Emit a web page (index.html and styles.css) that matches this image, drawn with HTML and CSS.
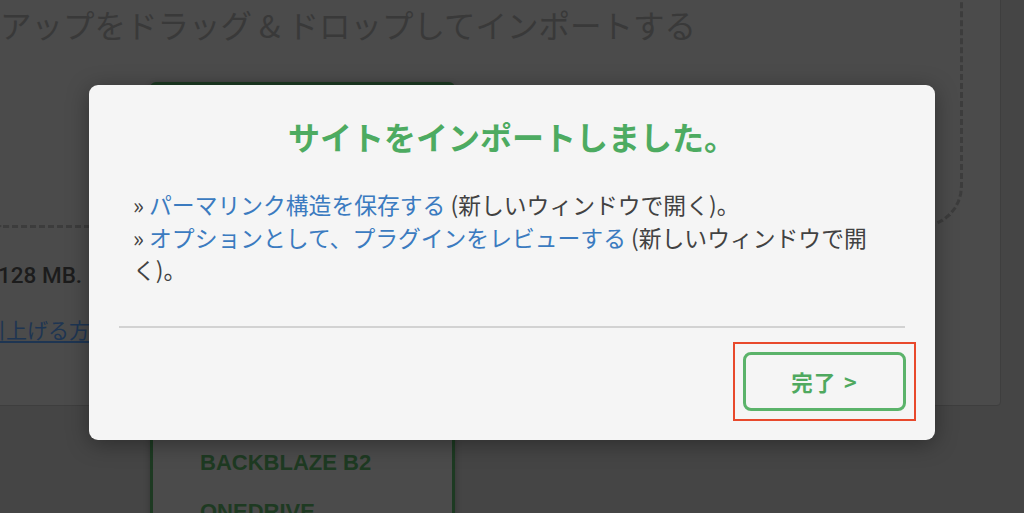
FILE: index.html
```html
<!DOCTYPE html>
<html lang="ja">
<head>
<meta charset="utf-8">
<title>インポート完了</title>
<link rel="stylesheet" href="styles.css">
</head>
<body>
  <div class="page">
    <section class="card">
      <div class="dropzone">
        <h1 class="dropzone-title">アップをドラッグ &amp; ドロップしてインポートする</h1>
      </div>
      <p class="limit">128 MB.</p>
      <p class="help"><a href="#" class="help-link">引上げる方法</a></p>
    </section>
  </div>

  <ul class="dropdown">
    <li>ファイル</li>
    <li>URL</li>
    <li>FTP</li>
    <li>DROPBOX</li>
    <li>GOOGLE DRIVE</li>
    <li>AMAZON S3</li>
    <li>BOX</li>
    <li>BACKBLAZE B2</li>
    <li>ONEDRIVE</li>
  </ul>

  <div class="overlay">
    <div class="modal" role="dialog">
      <div class="modal-body">
        <h2 class="modal-title">サイトをインポートしました。</h2>
        <p class="modal-text">» <a href="#" class="link">パーマリンク構造を保存する</a> (新しいウィンドウで開く)。<br>» <a href="#" class="link">オプションとして、プラグインをレビューする</a> (新しいウィンドウで開く)。</p>
      </div>
      <hr class="divider">
      <div class="modal-footer">
        <div class="highlight">
          <button class="btn-done">完了 &gt;</button>
        </div>
      </div>
    </div>
  </div>
</body>
</html>
```

FILE: styles.css
```css
html, body {
  margin: 0;
  padding: 0;
}

body {
  width: 1024px;
  height: 513px;
  overflow: hidden;
  background: #454545;
  font-family: "Noto Sans CJK JP", "Noto Sans", sans-serif;
  position: relative;
}

.page {
  height: 513px;
  overflow: hidden;
}

/* dimmed page underneath */
.card {
  margin: -60px 0 0 -40px;
  width: 1041px;
  box-sizing: border-box;
  background: #4b4b4b;
  border: 1px solid #3e3e3e;
  border-radius: 4px;
  padding: 0 37px 61px;
}

.dropzone {
  box-sizing: border-box;
  height: 287px;
  border: 3px dashed #3c3c3c;
  border-top: none;
  border-left: none;
  border-radius: 0 0 42px 0;
  padding: 63px 0 0 2px;
}

.dropzone-title {
  margin: 0;
  font-size: 31.5px;
  line-height: 40px;
  font-weight: 400;
  color: #393939;
  white-space: nowrap;
}

.limit {
  margin: 33px 0 0;
  font-family: Roboto, "Noto Sans", sans-serif;
  font-weight: 500;
  font-size: 22.5px;
  line-height: 28px;
  color: #1c1c1c;
}

.help {
  margin: 25px 0 0;
  font-size: 21px;
  line-height: 30px;
}

.help-link {
  margin-left: -13px;
  color: #1e3552;
  text-decoration: underline;
  text-decoration-color: #1e3552;
  text-underline-offset: 3px;
}

.dropdown {
  position: absolute;
  left: 150px;
  top: 82px;
  width: 305px;
  height: 520px;
  box-sizing: border-box;
  margin: 0;
  padding: 10px 0 0 47px;
  list-style: none;
  border: 3px solid #1d3a22;
  border-radius: 6px;
  background: #4b4b4b;
  box-shadow: 0 2px 6px rgba(0, 0, 0, 0.25);
}

.dropdown li {
  height: 49px;
  line-height: 49px;
  font-family: "Liberation Sans", Arial, sans-serif;
  font-weight: 700;
  font-size: 22px;
  color: #1e3a22;
  white-space: nowrap;
}

/* modal */
.overlay {
  position: absolute;
  inset: 0;
  display: flex;
  justify-content: center;
  align-items: flex-start;
  padding-top: 85px;
}

.modal {
  width: 846px;
  background: #f5f5f5;
  border-radius: 9px;
  box-shadow: 0 4px 22px rgba(0, 0, 0, 0.35);
}

.modal-body {
  padding: 31px 44px 39px;
}

.modal-title {
  margin: 0;
  text-align: center;
  font-size: 32px;
  line-height: 40px;
  font-weight: 700;
  color: #4dab61;
}

.modal-text {
  margin: 33px 0 0;
  font-size: 22.8px;
  line-height: 32.5px;
  color: #424242;
}

.link {
  color: #3b7bc0;
  text-decoration: none;
}

.divider {
  margin: 0 30px;
  border: none;
  height: 2px;
  background: #d2d2d2;
}

.modal-footer {
  display: flex;
  justify-content: flex-end;
  padding: 14px 19px 19px;
}

.highlight {
  border: 2px solid #e8492c;
  padding: 8px;
}

.btn-done {
  display: block;
  width: 163px;
  height: 59px;
  box-sizing: border-box;
  background: transparent;
  border: 3px solid #5bb36a;
  border-radius: 8px;
  color: #4fa95f;
  font-family: "Noto Sans CJK JP", "Noto Sans", sans-serif;
  font-weight: 700;
  font-size: 21.5px;
  letter-spacing: 1px;
  word-spacing: 2px;
  cursor: pointer;
}
```
